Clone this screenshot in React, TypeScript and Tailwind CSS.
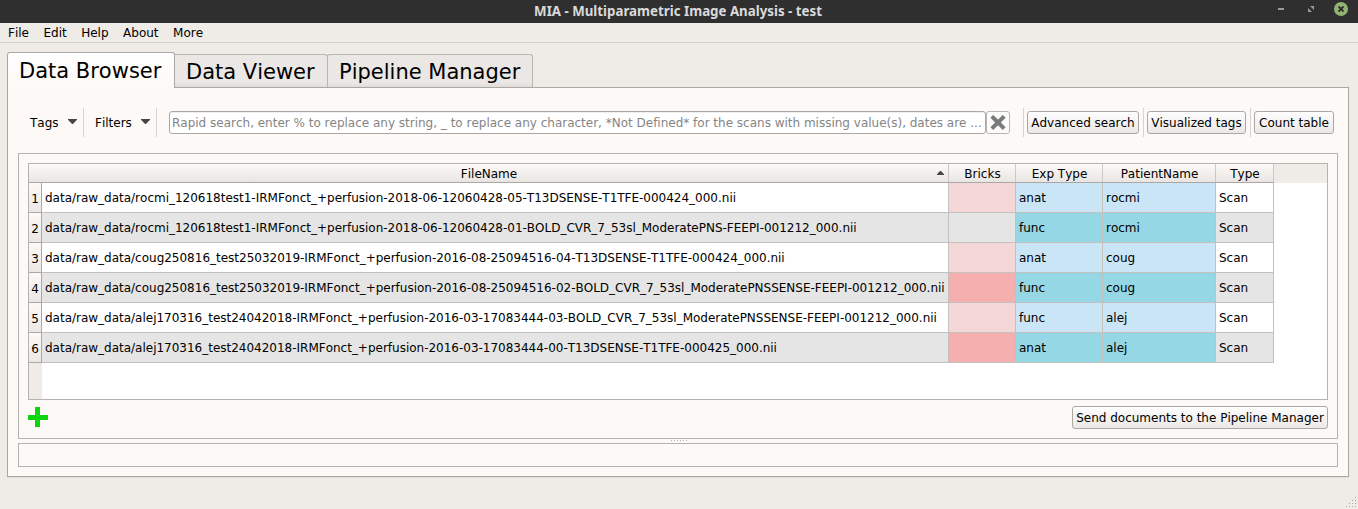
import type { ReactNode } from 'react';

type Tone = 'none' | 'pink' | 'red';
type Row = { file: string; brick: Tone; exp: string; patient: string; type: string };

const rows: Row[] = [
  { file: 'data/raw_data/rocmi_120618test1-IRMFonct_+perfusion-2018-06-12060428-05-T13DSENSE-T1TFE-000424_000.nii', brick: 'pink', exp: 'anat', patient: 'rocmi', type: 'Scan' },
  { file: 'data/raw_data/rocmi_120618test1-IRMFonct_+perfusion-2018-06-12060428-01-BOLD_CVR_7_53sl_ModeratePNS-FEEPI-001212_000.nii', brick: 'none', exp: 'func', patient: 'rocmi', type: 'Scan' },
  { file: 'data/raw_data/coug250816_test25032019-IRMFonct_+perfusion-2016-08-25094516-04-T13DSENSE-T1TFE-000424_000.nii', brick: 'pink', exp: 'anat', patient: 'coug', type: 'Scan' },
  { file: 'data/raw_data/coug250816_test25032019-IRMFonct_+perfusion-2016-08-25094516-02-BOLD_CVR_7_53sl_ModeratePNSSENSE-FEEPI-001212_000.nii', brick: 'red', exp: 'func', patient: 'coug', type: 'Scan' },
  { file: 'data/raw_data/alej170316_test24042018-IRMFonct_+perfusion-2016-03-17083444-03-BOLD_CVR_7_53sl_ModeratePNSSENSE-FEEPI-001212_000.nii', brick: 'pink', exp: 'func', patient: 'alej', type: 'Scan' },
  { file: 'data/raw_data/alej170316_test24042018-IRMFonct_+perfusion-2016-03-17083444-00-T13DSENSE-T1TFE-000425_000.nii', brick: 'red', exp: 'anat', patient: 'alej', type: 'Scan' },
];

const brickTone: Record<Tone, string> = { none: '', pink: 'bg-[#f5d7d8]', red: 'bg-[#f6afaf]' };
const gridCols = 'grid grid-cols-[13px_907px_67px_87px_113px_58px] grid-rows-[30px] w-[1245px]';

function TitleBar() {
  return (
    <header className="relative flex h-[23px] items-start justify-center bg-[#2f2f2f] pr-[2px]">
      <h1 className="font-['Noto_Sans',sans-serif] text-[13.3px] leading-[23px] font-bold text-[#dadada] [font-kerning:auto]">
        MIA - Multiparametric Image Analysis - test
      </h1>
      <svg className="absolute top-0 right-0" width="98" height="23" aria-hidden="true">
        <rect x="18" y="8" width="6" height="2" fill="#999" />
        <path d="M50 6h4v4zM48 8v4h4z" fill="#999" />
        <circle cx="81" cy="9" r="7" fill="#92b372" />
        <path d="M78.5 6.5l5 5M83.5 6.5l-5 5" stroke="#2f2f2f" strokeWidth="1.8" />
      </svg>
    </header>
  );
}

function MenuBar() {
  return (
    <nav className="flex h-5 gap-[14.5px] border-b border-[#d3d0cc] pl-2 leading-[21px]">
      {['File', 'Edit', 'Help', 'About', 'More'].map((m) => (
        <span key={m}>{m}</span>
      ))}
    </nav>
  );
}

function Tabs() {
  return (
    <div className="flex h-9 items-end pl-[7px] text-[21px] whitespace-nowrap">
      <div className="z-10 flex h-9 w-[168px] rounded-t-[3px] border border-b-0 border-[#aaa7a4] bg-linear-to-b from-white to-[#fdf9f6] pl-[11px] leading-[36px]">
        Data Browser
      </div>
      <div className="flex h-[34px] w-[153px] rounded-tr-[3px] border border-l-0 border-[#b8b5b2] border-b-[#aaa7a4] bg-linear-to-b from-[#eae7e4] from-85% to-[#e0dddb] pl-[11px] leading-[34px]">
        Data Viewer
      </div>
      <div className="-ml-px flex h-[34px] w-[206px] rounded-t-[3px] border border-[#b8b5b2] border-b-[#aaa7a4] bg-linear-to-b from-[#eae7e4] from-85% to-[#e0dddb] pl-[11px] leading-[34px]">
        Pipeline Manager
      </div>
    </div>
  );
}

function PushButton({ className, children }: { className: string; children: ReactNode }) {
  return (
    <button
      type="button"
      className={`h-[23px] shrink-0 rounded-[3px] border border-[#aaa7a4] bg-linear-to-b from-[#fefefe] to-[#ece8e6] text-center leading-[22px] whitespace-nowrap ${className}`}
    >
      {children}
    </button>
  );
}

function Separator({ className }: { className: string }) {
  return <div className={`h-[29px] w-px shrink-0 bg-[#d6d3d0] ${className}`} />;
}

function DropArrow({ className }: { className: string }) {
  return (
    <svg className={className} width="9" height="5" viewBox="0 0 9 5" aria-hidden="true">
      <path d="M0 0h9v.8L4.9 5h-.8L0 .8z" fill="#454545" />
    </svg>
  );
}

function Toolbar() {
  return (
    <div className="flex h-[29px] items-center">
      <div className="flex w-[75px] items-center justify-between pr-[6px] pl-[22px]">
        Tags
        <DropArrow className="-mt-[2px]" />
      </div>
      <Separator className="" />
      <div className="flex w-[72px] items-center justify-between pr-[6px] pl-[11px]">
        Filters
        <DropArrow className="-mt-[2px]" />
      </div>
      <Separator className="" />
      <div className="ml-3 h-[23px] w-[817px] shrink-0 rounded-[3px] border border-[#aaa7a4] bg-white pl-[2px] leading-[22px] tracking-[-0.006px] whitespace-nowrap text-[#858585] shadow-[inset_0_1px_0_#efefef]">
        Rapid search, enter % to replace any string, _ to replace any character, *Not Defined* for the scans with missing value(s), dates are ...
      </div>
      <button type="button" aria-label="Clear" className="flex h-[23px] w-6 shrink-0 items-center justify-center rounded-[3px] border border-[#b8b5b2] bg-[#fdfcfb]">
        <svg width="16" height="16" viewBox="0 0 16 16" aria-hidden="true">
          <path d="M1.8 1.3l12.4 12.4M14.2 1.3L1.8 13.7" stroke="#7b7b7b" strokeWidth="4" />
        </svg>
      </button>
      <Separator className="ml-[13px]" />
      <PushButton className="ml-[3px] w-[112px]">Advanced search</PushButton>
      <Separator className="ml-1" />
      <PushButton className="ml-[3px] w-[99px]">Visualized tags</PushButton>
      <Separator className="ml-1" />
      <PushButton className="ml-[3px] w-20">Count table</PushButton>
    </div>
  );
}

function HeaderCell({ children, sorted = false }: { children: ReactNode; sorted?: boolean }) {
  return (
    <div className="relative border-r border-b border-r-[#cbc8c5] border-b-[#aaa7a4] bg-linear-to-b from-[#fcf9f6] to-[#e8e5e2] pl-px text-center leading-[21px]">
      {children}
      {sorted && (
        <svg className="absolute top-[7px] right-1" width="7" height="4" viewBox="0 0 7 4" aria-hidden="true">
          <path d="M3 0h1l3 3.2V4H0v-.8z" fill="#454545" />
        </svg>
      )}
    </div>
  );
}

function ScanTable() {
  return (
    <div className="h-[237px] w-[1300px] border border-[#b5b2af] bg-white">
      <div className="flex h-[19px] bg-[#efebe7]">
        <div className="grid w-[1245px] grid-cols-[920px_67px_87px_113px_58px] grid-rows-[19px]">
          <HeaderCell sorted>FileName</HeaderCell>
          <HeaderCell>Bricks</HeaderCell>
          <HeaderCell>Exp Type</HeaderCell>
          <HeaderCell>PatientName</HeaderCell>
          <HeaderCell>Type</HeaderCell>
        </div>
      </div>
      {rows.map((r, i) => {
        const cell = 'border-r border-b border-[#c3c0be] pl-[3px] leading-[31px] whitespace-nowrap';
        const stripe = i % 2 ? 'bg-[#e5e5e5]' : 'bg-white';
        const blue = i % 2 ? 'bg-[#95d7e4]' : 'bg-[#c9e5f6]';
        return (
          <div key={i} className={`h-[30px] ${gridCols} ${stripe}`}>
            <div className="border-r border-b border-[#aaa7a4] bg-linear-to-b from-[#fcf9f6] to-[#ebe7e4] text-center leading-[33px]">{i + 1}</div>
            <div className={`${cell} tracking-[-0.009px]`}>{r.file}</div>
            <div className={`${cell} ${brickTone[r.brick]}`} />
            <div className={`${cell} ${blue}`}>{r.exp}</div>
            <div className={`${cell} ${blue}`}>{r.patient}</div>
            <div className={cell}>{r.type}</div>
          </div>
        );
      })}
      <div className="h-9 w-[13px] bg-[#efebe7]" />
    </div>
  );
}

export default function App() {
  return (
    <div className="flex h-[509px] w-[1358px] flex-col overflow-hidden bg-[#efebe7] font-['DejaVu_Sans',sans-serif] text-[12px] text-black [font-kerning:none]">
      <TitleBar />
      <MenuBar />
      <div className="h-[9px]" />
      <Tabs />
      <main className="-mt-px ml-[7px] h-[390px] w-[1342px] border border-[#aaa7a4] bg-[#fdf9f6] pt-5 shadow-[0_1px_0_#e2dfdc]">
        <Toolbar />
        <section className="mt-4 ml-[10px] h-[286px] w-[1320px] border border-[#b5b2af] pt-[9px] pl-[9px]">
          <ScanTable />
          <div className="mt-[6px] flex w-[1300px] justify-between">
            <svg className="mt-px" width="20" height="20" aria-label="Add">
              <path d="M7 0h5v8h8v5h-8v7H7v-7H0V8h7z" fill="#0fd40f" />
            </svg>
            <PushButton className="w-64">Send documents to the Pipeline Manager</PushButton>
          </div>
        </section>
        <div className="flex h-1 items-start justify-center gap-[2px] pt-px pl-px">
          {[0, 1, 2, 3, 4, 5].map((d) => (
            <i key={d} className="size-px bg-[#b5b2af]" />
          ))}
        </div>
        <section className="ml-[10px] h-6 w-[1320px] border border-[#b5b2af]" />
      </main>
      <footer className="flex flex-1 items-end justify-end pr-[2px] pb-[2px]">
        <svg width="10" height="10" aria-hidden="true">
          <path
            d="M9 0h1v1H9zM6 3h1v1H6zM9 3h1v1H9zM3 6h1v1H3zM6 6h1v1H6zM9 6h1v1H9zM0 9h1v1H0zM3 9h1v1H3zM6 9h1v1H6zM9 9h1v1H9z"
            fill="#aaa7a4"
          />
        </svg>
      </footer>
    </div>
  );
}
